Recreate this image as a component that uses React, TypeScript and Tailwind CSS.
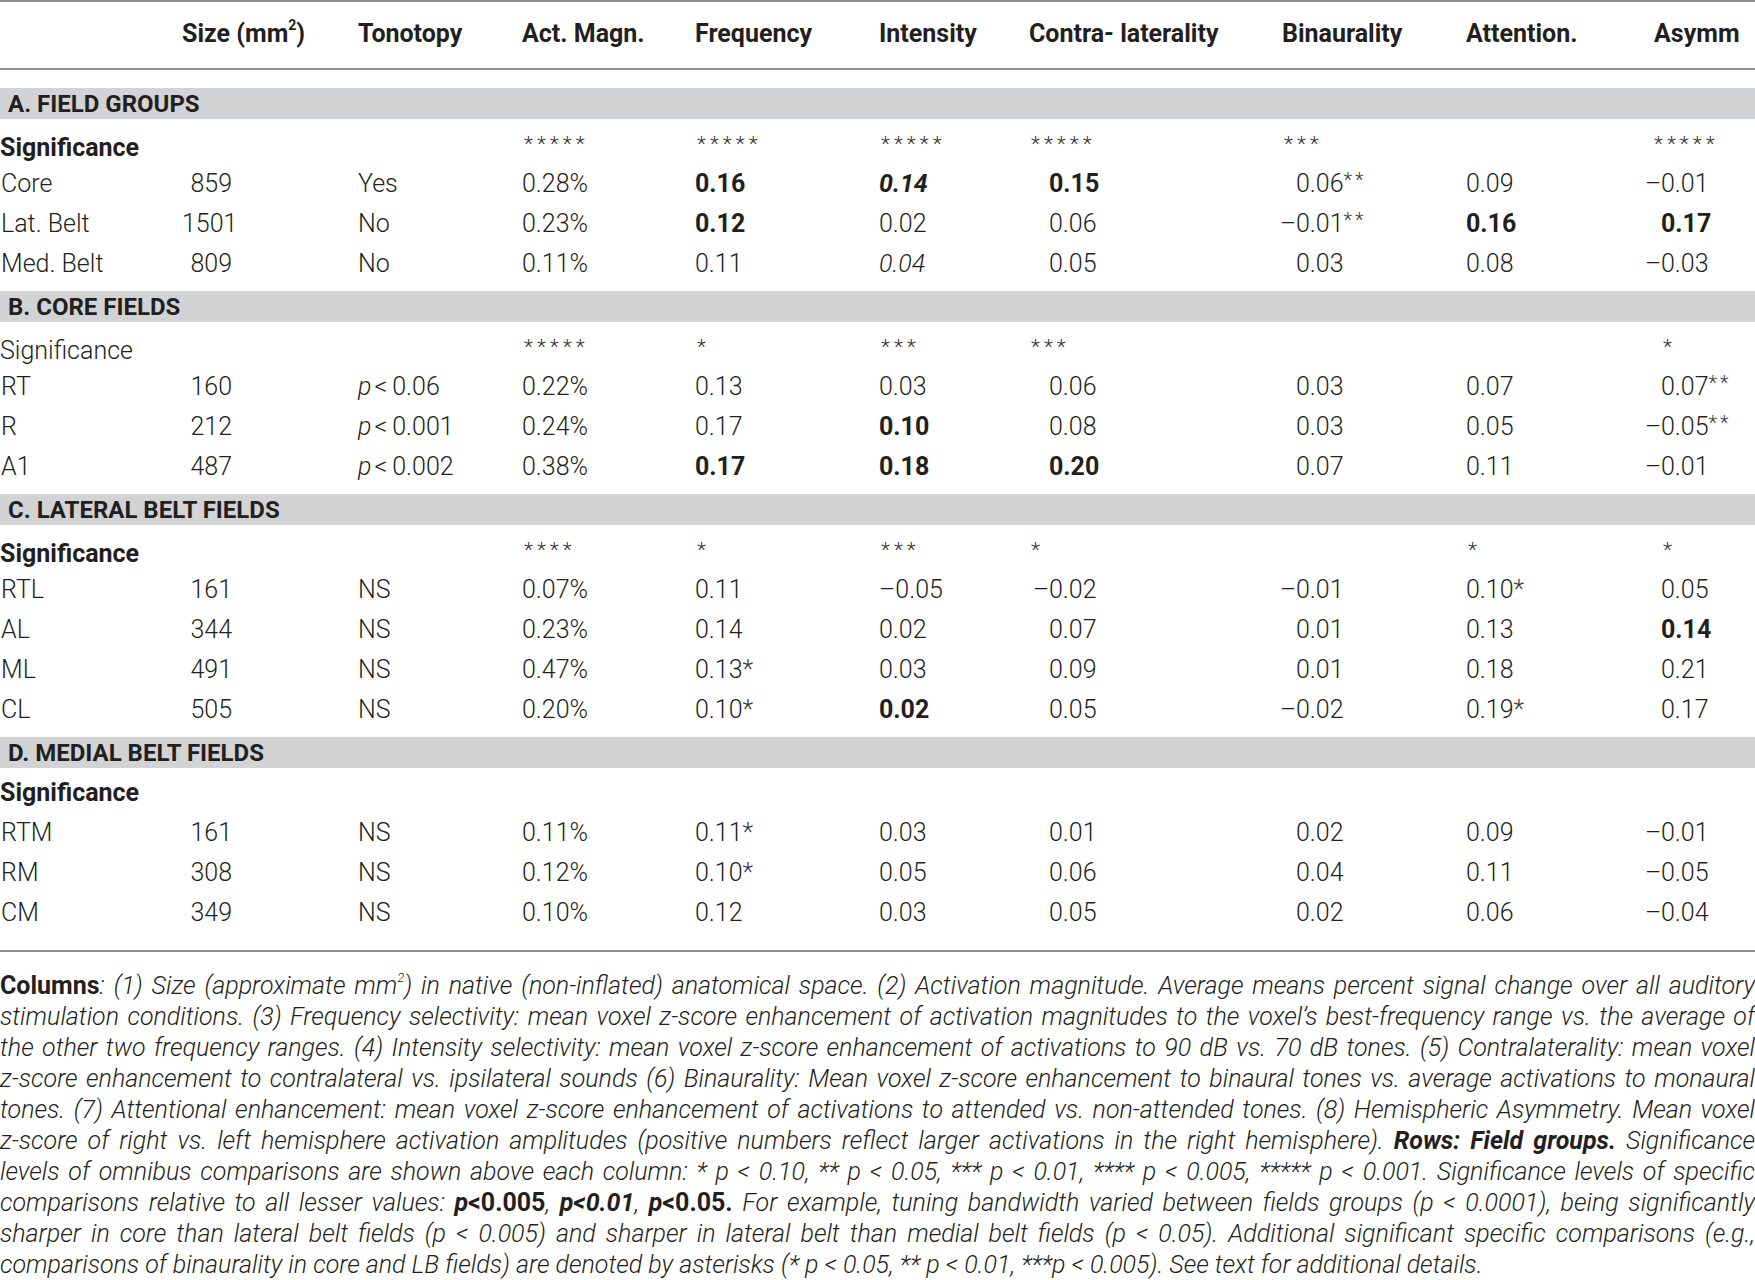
import React from "react";

// column starts: 0, 182, 358, 522, 695, 879, 1029, 1282, 1466, 1654
const GRID =
  "grid grid-cols-[182px_176px_164px_173px_184px_150px_253px_184px_188px_101px]";

// digit start offset inside each value column (tonotopy..asymm), and whether a minus hangs left
const valueCols = [
  { pad: 0, hang: false }, // tonotopy
  { pad: 0, hang: false }, // act magn
  { pad: 0, hang: false }, // frequency
  { pad: 0, hang: false }, // intensity
  { pad: 20, hang: true }, // contra
  { pad: 14, hang: true }, // binaurality
  { pad: 0, hang: false }, // attention
  { pad: 7, hang: true }, // asymm
];

const padClass: Record<number, string> = {
  0: "pl-0",
  2: "pl-[2px]",
  7: "pl-[7px]",
  9: "pl-[9px]",
  14: "pl-[14px]",
  20: "pl-[20px]",
};

type Row = { label: string; size: string; vals: string[] };
type Section = {
  title: string;
  sigBold: boolean;
  stars: [string, number][];
  rows: Row[];
};

const sections: Section[] = [
  {
    title: "A. FIELD GROUPS",
    sigBold: true,
    stars: [["", 0], ["", 0], ["*****", 2], ["*****", 2], ["*****", 2], ["*****", 2], ["***", 2], ["", 2], ["*****", 0]],
    rows: [
      { label: "Core", size: "859", vals: ["Yes", "0.28%", "b:0.16", "bi:0.14", "b:0.15", "0.06**", "0.09", "–0.01"] },
      { label: "Lat. Belt", size: "1501", vals: ["No", "0.23%", "b:0.12", "0.02", "0.06", "–0.01**", "b:0.16", "b:0.17"] },
      { label: "Med. Belt", size: "809", vals: ["No", "0.11%", "0.11", "i:0.04", "0.05", "0.03", "0.08", "–0.03"] },
    ],
  },
  {
    title: "B. CORE FIELDS",
    sigBold: false,
    stars: [["", 0], ["", 0], ["*****", 2], ["*", 2], ["***", 2], ["***", 2], ["", 2], ["", 2], ["*", 9]],
    rows: [
      { label: "RT", size: "160", vals: ["p:0.06", "0.22%", "0.13", "0.03", "0.06", "0.03", "0.07", "0.07**"] },
      { label: "R", size: "212", vals: ["p:0.001", "0.24%", "0.17", "b:0.10", "0.08", "0.03", "0.05", "–0.05**"] },
      { label: "A1", size: "487", vals: ["p:0.002", "0.38%", "b:0.17", "b:0.18", "b:0.20", "0.07", "0.11", "–0.01"] },
    ],
  },
  {
    title: "C. LATERAL BELT FIELDS",
    sigBold: true,
    stars: [["", 0], ["", 0], ["****", 2], ["*", 2], ["***", 2], ["*", 2], ["", 2], ["*", 2], ["*", 9]],
    rows: [
      { label: "RTL", size: "161", vals: ["NS", "0.07%", "0.11", "–0.05", "–0.02", "–0.01", "0.10*", "0.05"] },
      { label: "AL", size: "344", vals: ["NS", "0.23%", "0.14", "0.02", "0.07", "0.01", "0.13", "b:0.14"] },
      { label: "ML", size: "491", vals: ["NS", "0.47%", "0.13*", "0.03", "0.09", "0.01", "0.18", "0.21"] },
      { label: "CL", size: "505", vals: ["NS", "0.20%", "0.10*", "b:0.02", "0.05", "–0.02", "0.19*", "0.17"] },
    ],
  },
  {
    title: "D. MEDIAL BELT FIELDS",
    sigBold: true,
    stars: [],
    rows: [
      { label: "RTM", size: "161", vals: ["NS", "0.11%", "0.11*", "0.03", "0.01", "0.02", "0.09", "–0.01"] },
      { label: "RM", size: "308", vals: ["NS", "0.12%", "0.10*", "0.05", "0.06", "0.04", "0.11", "–0.05"] },
      { label: "CM", size: "349", vals: ["NS", "0.10%", "0.12", "0.03", "0.05", "0.02", "0.06", "–0.04"] },
    ],
  },
];

const ValueCell = ({ raw, col }: { raw: string; col: number }) => {
  const cfg = valueCols[col];
  if (raw.startsWith("p:")) {
    return (
      <div>
        <span className="italic">p</span>
        <span className="ml-[3px] mr-[5px]">&lt;</span>
        {raw.slice(2)}
      </div>
    );
  }
  let text = raw;
  let style = "";
  if (text.startsWith("bi:")) {
    style = "font-bold italic";
    text = text.slice(3);
  } else if (text.startsWith("b:")) {
    style = "font-bold";
    text = text.slice(2);
  } else if (text.startsWith("i:")) {
    style = "italic";
    text = text.slice(2);
  }
  const m = text.match(/^(–?)([^*]*)(\**)$/);
  const sign = m ? m[1] : "";
  const num = m ? m[2] : text;
  const stars = m ? m[3] : "";
  const twoStars = stars.length > 1;
  return (
    <div className={`${padClass[cfg.pad]} whitespace-nowrap`}>
      {sign && cfg.hang ? (
        <span className="inline-block w-[16px] -ml-[16px] text-right">{sign}</span>
      ) : (
        sign
      )}
      <span className={style}>{num}</span>
      {stars &&
        (twoStars ? (
          <span className="text-[20px] tracking-[3px] text-[#3a3a3a] align-[5px]">{stars}</span>
        ) : (
          <span className="text-[#3a3a3a]">{stars}</span>
        ))}
    </div>
  );
};

const Header = () => (
  <div className={`${GRID} h-[66px] items-center font-bold text-[25px] pb-[2px]`}>
    <div />
    <div>
      Size (mm<sup className="text-[14px] align-[5px]">2</sup>)
    </div>
    <div>Tonotopy</div>
    <div>Act. Magn.</div>
    <div>Frequency</div>
    <div>Intensity</div>
    <div>Contra- laterality</div>
    <div>Binaurality</div>
    <div>Attention.</div>
    <div>Asymm</div>
  </div>
);

const TableSection = ({ s, first }: { s: Section; first: boolean }) => (
  <div className={first ? "mt-[18px]" : ""}>
    <div className="h-[31px] bg-[#d1d3d4] flex items-center pl-[8px] font-bold text-[24px]">
      {s.title}
    </div>
    <div className="pt-[5px] pb-[7px]">
      <div className={`${GRID} h-[40px] items-center`}>
        <div className={s.sigBold ? "font-bold" : ""}>Significance</div>
        {s.stars.map(([st, pad], i) => (
          <div key={i} className={`${padClass[pad]} mb-[9px]`}>
            <span className="text-[21px] tracking-[4px] text-[#333]">{st}</span>
          </div>
        ))}
      </div>
      {s.rows.map((r) => (
        <div key={r.label} className={`${GRID} h-[40px] items-center`}>
          <div className="pl-[1px]">{r.label}</div>
          <div>
            <span className="inline-block w-[50px] text-right">{r.size}</span>
          </div>
          {r.vals.map((v, i) => (
            <ValueCell key={i} raw={v} col={i} />
          ))}
        </div>
      ))}
    </div>
  </div>
);

const B = ({ children }: { children: React.ReactNode }) => (
  <span className="font-bold not-italic">{children}</span>
);

const captionLines: React.ReactNode[] = [
  <>
    <B>Columns</B>: (1) Size (approximate mm<sup className="text-[13px] align-[6px]">2</sup>) in native (non-inflated) anatomical space. (2) Activation magnitude. Average means percent signal change over all auditory
  </>,
  <>stimulation conditions. (3) Frequency selectivity: mean voxel z-score enhancement of activation magnitudes to the voxel’s best-frequency range vs. the average of</>,
  <>the other two frequency ranges. (4) Intensity selectivity: mean voxel z-score enhancement of activations to 90 dB vs. 70 dB tones. (5) Contralaterality: mean voxel</>,
  <>z-score enhancement to contralateral vs. ipsilateral sounds (6) Binaurality: Mean voxel z-score enhancement to binaural tones vs. average activations to monaural</>,
  <>tones. (7) Attentional enhancement: mean voxel z-score enhancement of activations to attended vs. non-attended tones. (8) Hemispheric Asymmetry. Mean voxel</>,
  <>
    z-score of right vs. left hemisphere activation amplitudes (positive numbers reflect larger activations in the right hemisphere).{" "}
    <span className="font-bold">Rows: Field groups.</span> Significance
  </>,
  <>levels of omnibus comparisons are shown above each column: * p &lt; 0.10, ** p &lt; 0.05, *** p &lt; 0.01, **** p &lt; 0.005, ***** p &lt; 0.001. Significance levels of specific</>,
  <>
    comparisons relative to all lesser values: <span className="font-bold">p</span>
    <B>&lt;0.005</B>, <span className="font-bold">p&lt;0.01</span>, <span className="font-bold">p</span>
    <B>&lt;0.05.</B> For example, tuning bandwidth varied between fields groups (p &lt; 0.0001), being significantly
  </>,
  <>sharper in core than lateral belt fields (p &lt; 0.005) and sharper in lateral belt than medial belt fields (p &lt; 0.05). Additional significant specific comparisons (e.g.,</>,
  <>comparisons of binaurality in core and LB fields) are denoted by asterisks (* p &lt; 0.05, ** p &lt; 0.01, ***p &lt; 0.005). See text for additional details.</>,
];

export default function App() {
  return (
    <div className="w-[1755px] h-[1280px] overflow-hidden bg-white text-[#231f20] font-['Roboto',sans-serif] font-light text-[25px]">
      <div className="border-t-2 border-b-2 border-[#8f8f8f] pb-[10px]">
        <div className="border-b-2 border-[#8f8f8f]">
          <Header />
        </div>
        {sections.map((s, i) => (
          <TableSection key={s.title} s={s} first={i === 0} />
        ))}
      </div>
      <div className="mt-[18px] italic text-[25px] leading-[31px]">
        {captionLines.map((l, i) => (
          <div
            key={i}
            className={
              i === captionLines.length - 1
                ? "whitespace-nowrap"
                : "whitespace-nowrap text-justify [text-align-last:justify]"
            }
          >
            {l}
          </div>
        ))}
      </div>
    </div>
  );
}
